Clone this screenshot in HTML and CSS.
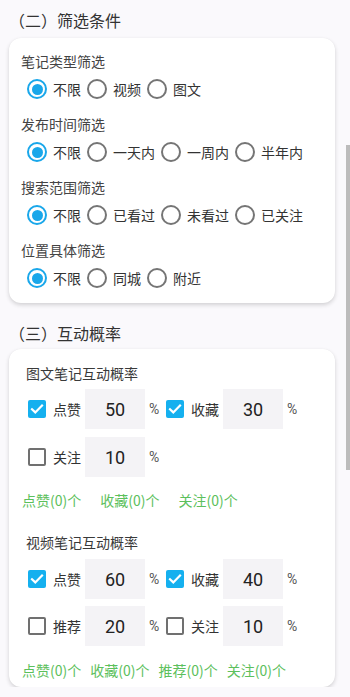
FILE: index.html
```html
<!DOCTYPE html>
<html lang="zh">
<head>
<meta charset="utf-8">
<link rel="stylesheet" href="styles.css">
</head>
<body>
<div class="page">
  <h2 class="sec-title">（二）筛选条件</h2>
  <div class="card filter-card">
    <div class="group">
      <div class="label">笔记类型筛选</div>
      <div class="radios">
        <span class="radio on"><i class="ring"></i>不限</span>
        <span class="radio"><i class="ring"></i>视频</span>
        <span class="radio"><i class="ring"></i>图文</span>
      </div>
    </div>
    <div class="group">
      <div class="label">发布时间筛选</div>
      <div class="radios">
        <span class="radio on"><i class="ring"></i>不限</span>
        <span class="radio"><i class="ring"></i>一天内</span>
        <span class="radio"><i class="ring"></i>一周内</span>
        <span class="radio"><i class="ring"></i>半年内</span>
      </div>
    </div>
    <div class="group">
      <div class="label">搜索范围筛选</div>
      <div class="radios">
        <span class="radio on"><i class="ring"></i>不限</span>
        <span class="radio"><i class="ring"></i>已看过</span>
        <span class="radio"><i class="ring"></i>未看过</span>
        <span class="radio"><i class="ring"></i>已关注</span>
      </div>
    </div>
    <div class="group">
      <div class="label">位置具体筛选</div>
      <div class="radios">
        <span class="radio on"><i class="ring"></i>不限</span>
        <span class="radio"><i class="ring"></i>同城</span>
        <span class="radio"><i class="ring"></i>附近</span>
      </div>
    </div>
  </div>

  <h2 class="sec-title sec-title-2">（三）互动概率</h2>
  <div class="card rate-card">
    <div class="sub-title">图文笔记互动概率</div>
    <div class="rate-row">
      <div class="rate-item">
        <span class="check on"><svg viewBox="0 0 18 18"><path d="M4 9.2l3.3 3.2L14 5.6" /></svg></span>
        <span class="rate-name">点赞</span><span class="rate-input">50</span><span class="pct">%</span>
      </div>
      <div class="rate-item">
        <span class="check on"><svg viewBox="0 0 18 18"><path d="M4 9.2l3.3 3.2L14 5.6" /></svg></span>
        <span class="rate-name">收藏</span><span class="rate-input">30</span><span class="pct">%</span>
      </div>
    </div>
    <div class="rate-row">
      <div class="rate-item">
        <span class="check"></span>
        <span class="rate-name">关注</span><span class="rate-input">10</span><span class="pct">%</span>
      </div>
    </div>
    <div class="stats stats-wide">
      <span>点赞(0)个</span><span>收藏(0)个</span><span>关注(0)个</span>
    </div>

    <div class="sub-title sub-title-2">视频笔记互动概率</div>
    <div class="rate-row video-row">
      <div class="rate-item">
        <span class="check on"><svg viewBox="0 0 18 18"><path d="M4 9.2l3.3 3.2L14 5.6" /></svg></span>
        <span class="rate-name">点赞</span><span class="rate-input">60</span><span class="pct">%</span>
      </div>
      <div class="rate-item">
        <span class="check on"><svg viewBox="0 0 18 18"><path d="M4 9.2l3.3 3.2L14 5.6" /></svg></span>
        <span class="rate-name">收藏</span><span class="rate-input">40</span><span class="pct">%</span>
      </div>
    </div>
    <div class="rate-row video-row">
      <div class="rate-item">
        <span class="check"></span>
        <span class="rate-name">推荐</span><span class="rate-input">20</span><span class="pct">%</span>
      </div>
      <div class="rate-item">
        <span class="check"></span>
        <span class="rate-name">关注</span><span class="rate-input">10</span><span class="pct">%</span>
      </div>
    </div>
    <div class="stats stats-tight">
      <span>点赞(0)个</span><span>收藏(0)个</span><span>推荐(0)个</span><span>关注(0)个</span>
    </div>
  </div>
</div>
<div class="scrollbar"></div>
</body>
</html>
```

FILE: styles.css
```css
* { box-sizing: border-box; }
html, body {
  margin: 0;
  padding: 0;
  background: #faf9fc;
  font-family: "Noto Sans CJK SC", "Noto Sans", sans-serif;
  color: #333;
}
.page {
  width: 344px;
  padding: 8px 0 0 9px;
}
.sec-title {
  margin: 0;
  font-family: "Noto Sans CJK TC", "Noto Sans CJK SC", sans-serif;
  font-size: 16px;
  font-weight: normal;
  line-height: 24px;
  color: #333;
}
.sec-title-2 { margin-top: 18px; }
.card {
  width: 326px;
  background: #fff;
  border-radius: 12px;
  box-shadow: 0 2px 4px rgba(0, 0, 0, 0.16), 0 0 1px rgba(0, 0, 0, 0.05);
}
.filter-card {
  margin-top: 6px;
  padding: 13px 0 7px 0;
  display: flex;
  flex-direction: column;
  gap: 7px;
}
.label {
  padding-left: 12px;
  font-size: 14px;
  line-height: 20px;
  color: #444;
}
.radios {
  height: 36px;
  display: flex;
  align-items: center;
  padding-left: 18px;
}
.radio {
  display: flex;
  align-items: center;
  font-size: 14px;
  line-height: 20px;
  color: #333;
  margin-right: 6px;
}
.ring {
  width: 20px;
  height: 20px;
  border: 2px solid #757575;
  border-radius: 50%;
  margin-right: 6px;
  display: flex;
  align-items: center;
  justify-content: center;
}
.radio.on .ring { border-color: #19a7ea; }
.radio.on .ring::after {
  content: "";
  width: 11px;
  height: 11px;
  border-radius: 50%;
  background: #19a7ea;
}

.rate-card {
  margin-top: 4px;
  padding: 14px 0 7px 0;
  display: flex;
  flex-direction: column;
}
.sub-title {
  padding-left: 17px;
  font-size: 14px;
  line-height: 20px;
  color: #3a3a3a;
  margin-bottom: 6px;
}
.sub-title-2 { margin-top: 22px; margin-bottom: 7px; }
.rate-row {
  display: flex;
  height: 40px;
  padding-left: 19px;
  margin-bottom: 8px;
}
.video-row { margin-bottom: 7px; }
.rate-item {
  display: flex;
  align-items: center;
}
.check {
  width: 18px;
  height: 18px;
  border: 2px solid #707070;
  border-radius: 2px;
  margin-right: 7px;
  display: flex;
  align-items: center;
  justify-content: center;
}
.check.on {
  border: none;
  background: #15b0ef;
}
.check svg { width: 18px; height: 18px; }
.check svg path {
  fill: none;
  stroke: #fff;
  stroke-width: 2.2;
  stroke-linecap: square;
}
.rate-name {
  width: 32px;
  font-size: 14px;
  line-height: 20px;
  color: #333;
}
.rate-input {
  width: 60px;
  height: 40px;
  background: #f4f3f6;
  display: flex;
  align-items: center;
  justify-content: center;
  font-family: Roboto, "Noto Sans", sans-serif;
  font-size: 18px;
  color: #222;
}
.pct {
  width: 21px;
  padding-left: 4px;
  font-family: Roboto, "Noto Sans", sans-serif;
  font-size: 14px;
  color: #555;
}
.stats {
  display: flex;
  padding-left: 13px;
  font-size: 14px;
  line-height: 20px;
  color: #5cc05c;
  margin-top: 5px;
}
.stats-wide { gap: 19px; }
.stats-tight { gap: 9px; margin-top: 7px; }
.scrollbar {
  position: fixed;
  right: 0;
  top: 145px;
  width: 4px;
  height: 325px;
  background: #bcbcbc;
}
```
